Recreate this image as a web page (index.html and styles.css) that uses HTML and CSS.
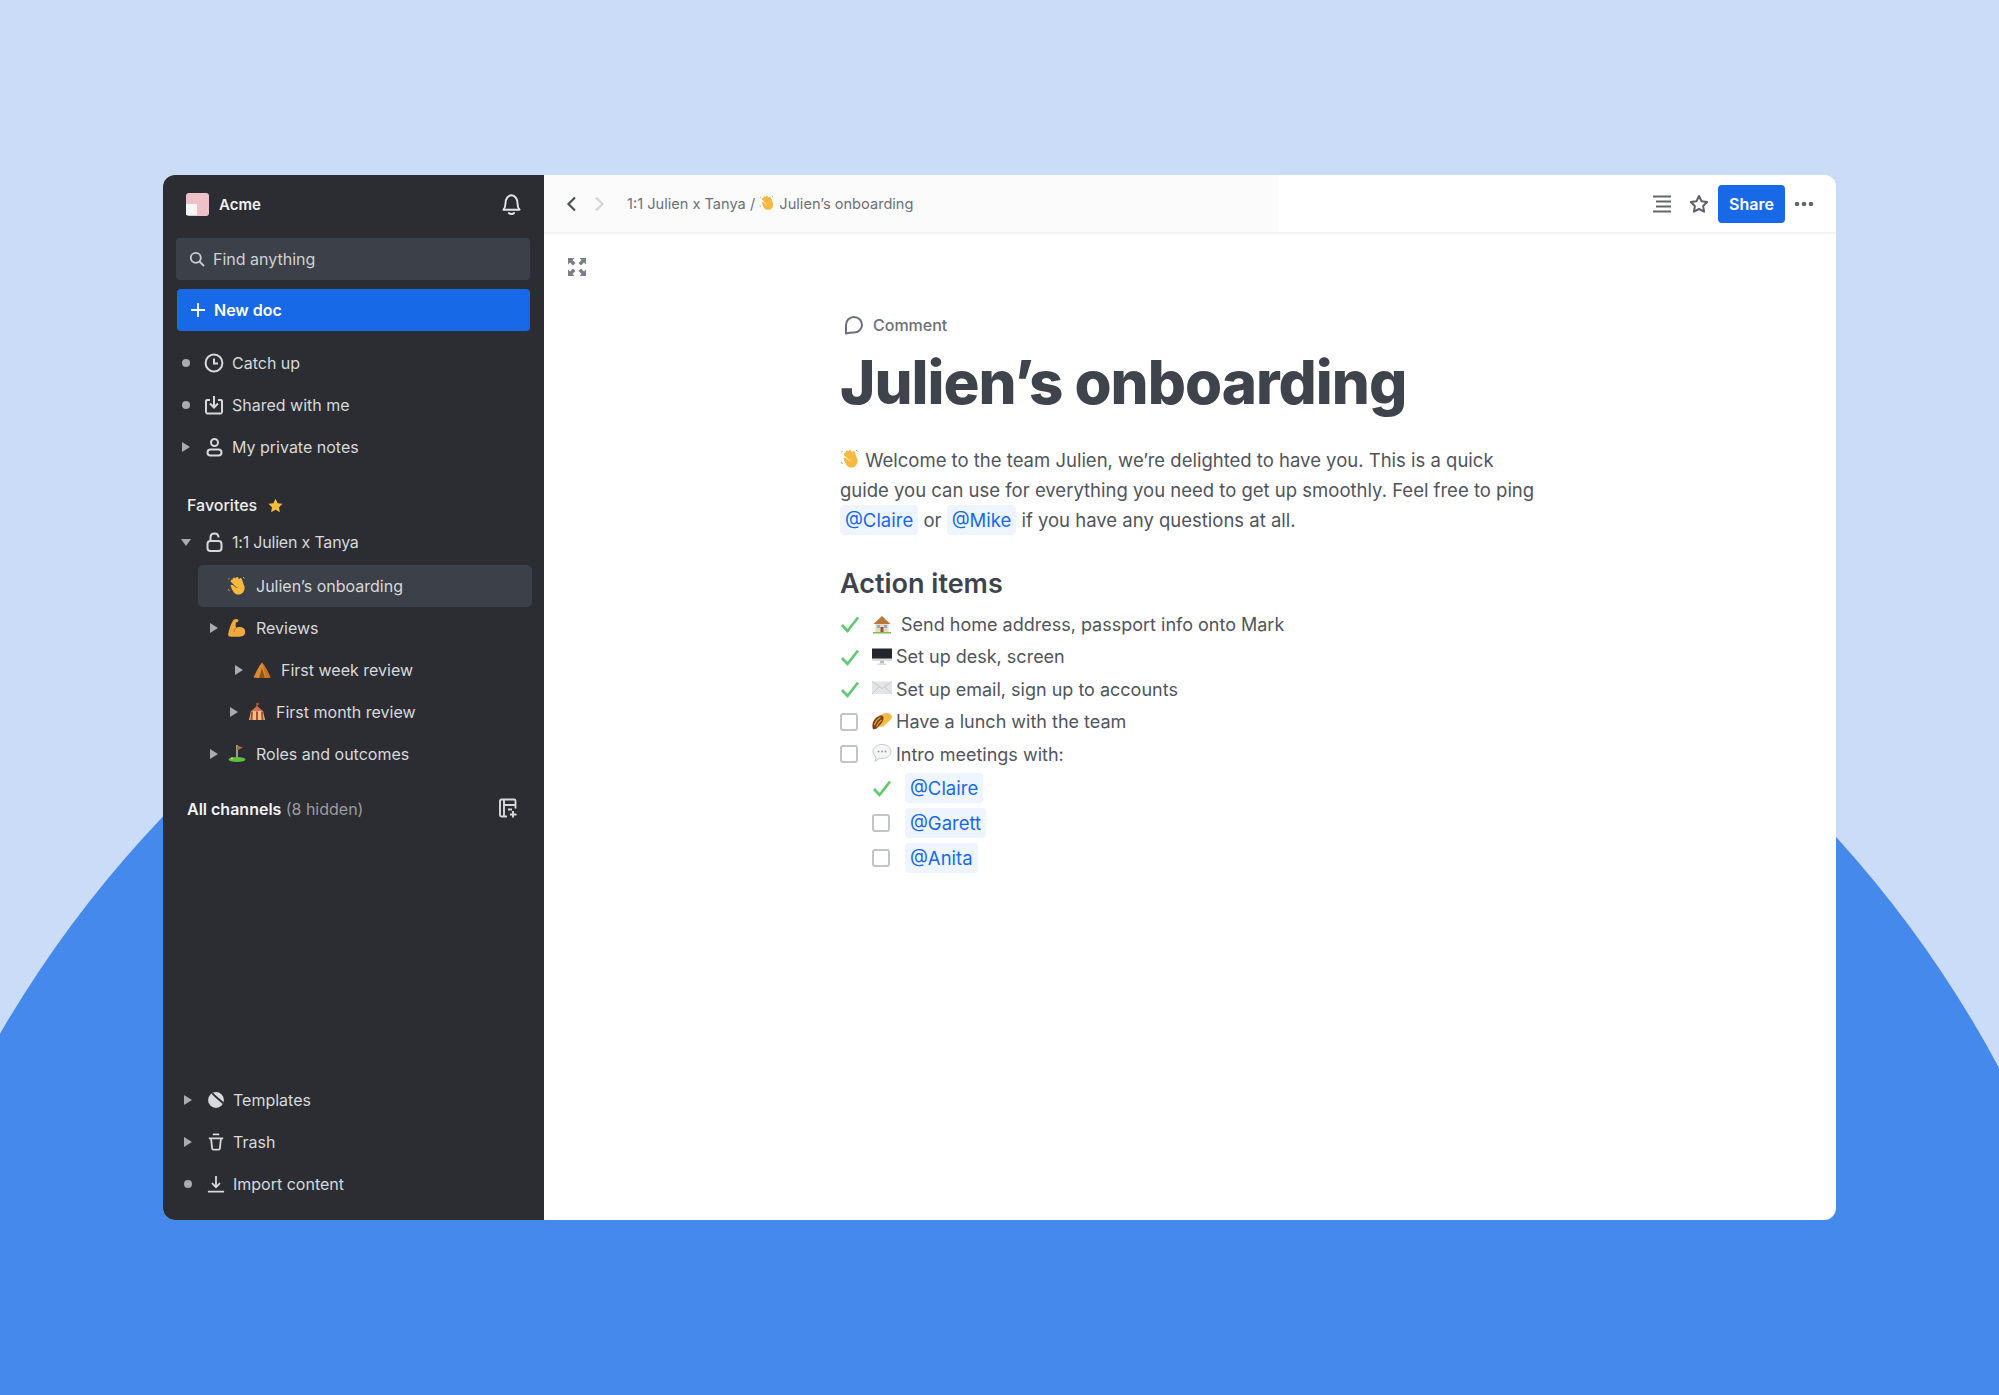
FILE: index.html
```html
<!DOCTYPE html>
<html lang="en">
<head>
  <meta charset="UTF-8">
  <title>Julien's onboarding</title>
  <link rel="stylesheet" href="styles.css">
</head>
<body>
  <!-- emoji drawn once, reused below -->
  <svg class="sprite" aria-hidden="true">
    <symbol id="e-wave" viewBox="0 0 20 20">
      <path d="M5 5l5 5M7 3l5 6M10 2.500l4 6.500M13.500 3.500l2 6" stroke="#f5b93d" stroke-width="2.800" stroke-linecap="round" fill="none"/>
      <path d="M3.500 9.500c1-1.500 3-.5 4 1l2 1.500 5-4 3 2c.5 4-1 8-5.500 8.500-4 .5-6.500-3-8.500-9z" fill="#f5b93d"/>
      <path d="M1.500 3.500l1-1.500M16 1l1.500 1.500M1 13l1.500 2" stroke="#9aa0a8" stroke-width="1" fill="none"/>
    </symbol>
    <symbol id="e-muscle" viewBox="0 0 20 20">
      <path d="M7 1.500c2-1 4.500-.5 4.500 1 0 1.500-2 1.500-2.500 2-.5 1.500-.5 3.500 0 5.500 2-1.500 6-1.500 8 .5 2 2.500 1.500 6-1 7.500-3 1-9 1-13.500 .5-1.500-.5-1.500-2-1-4C2.500 10 4.500 4 7 1.500z" fill="#f0a93a"/>
      <path d="M9 10c-1 1-2 2.500-2 4" stroke="#b97a1e" stroke-width="1" fill="none"/>
    </symbol>
    <symbol id="e-tent" viewBox="0 0 20 20">
      <path d="M10 2.500C7 6 4 12 1.500 17.500L6 18h8l4.500-.5C16 12 13 6 10 2.500z" fill="#dd8a30"/>
      <path d="M10 8l-3 10h6z" fill="#8a5620"/>
      <path d="M10 2.500c3 3.500 6 9 8.500 15l-4.500.5C13 13 11.500 7 10 2.500z" fill="#c5711f"/>
    </symbol>
    <symbol id="e-circus" viewBox="0 0 20 20">
      <path d="M10 1v4" stroke="#c8743a" stroke-width="1"/>
      <path d="M10 1l3 1-3 1z" fill="#d9503f"/>
      <path d="M10 4l6 5H4z" fill="#d9704a"/>
      <path d="M4 9h12l2 9H2z" fill="#ecc28a"/>
      <path d="M5 9.500L4.500 18M10 9.500V18M15 9.500l.5 8.500" stroke="#b8472f" stroke-width="2"/>
    </symbol>
    <symbol id="e-golf" viewBox="0 0 20 20">
      <path d="M10 1v14" stroke="#e5e5e5" stroke-width="1.200"/>
      <path d="M10 1.500l6 2-6 3z" fill="#c9622f"/>
      <ellipse cx="10" cy="15.500" rx="8.500" ry="2.500" fill="#5fbf3f"/>
      <circle cx="5" cy="14.300" r="1" fill="#d8e06a"/>
    </symbol>
    <symbol id="e-house" viewBox="0 0 20 20">
      <path d="M3.500 9h13v9h-13z" fill="#ecd9b4"/>
      <path d="M10 2L1.500 10h17z" fill="#b9773c"/>
      <path d="M5 11h3v3H5zM12 11h3v3h-3z" fill="#7fb2d9"/>
      <path d="M8.500 13h3v5h-3z" fill="#8a5a30"/>
      <path d="M1 18h18v1.500H1z" fill="#7dbb56"/>
    </symbol>
    <symbol id="e-monitor" viewBox="0 0 20 20">
      <path d="M0 1.500h20v12H0z" fill="#23262b"/>
      <path d="M0 11.500h20v2.500H0z" fill="#d9dbdd"/>
      <path d="M8 14h4v2.500H8z" fill="#b8babd"/>
      <path d="M5.500 16.500h9V18h-9z" fill="#d9dbdd"/>
    </symbol>
    <symbol id="e-mail" viewBox="0 0 20 20">
      <path d="M0 2.500h20V15H0z" fill="#e3e5e8"/>
      <path d="M0 2.500l10 7 10-7M0 15l7-7M20 15l-7-7" stroke="#c4c7cb" stroke-width="1" fill="none"/>
    </symbol>
    <symbol id="e-taco" viewBox="0 0 20 20">
      <path d="M4 15C3 7 9 .5 15 1c3 .3 5 2 5 4-1 3-5 6-9 9.500z" fill="#f3bb45"/>
      <path d="M1 17C-1 12 2 6 7 4c2-1 4-.5 4.500 1.500.5 3-2 6-4.500 8.500-2 2.500-4 4-6 3z" fill="#7a3f1a"/>
      <path d="M2.500 13c1-3 3-6 6-7.500M4.500 14.500c1-2 3-5 5-6.500" stroke="#e8a534" stroke-width="1.300" fill="none"/>
    </symbol>
    <symbol id="e-speech" viewBox="0 0 20 20">
      <path d="M10 .5c5 0 9 3 9 7s-4 7-9 7c-1 0-2 0-2.500-.3L3 17.500l1-4.500C2 11.500 1 9.500 1 7.500c0-4 4-7 9-7z" fill="#f4f5f6" stroke="#c6c9cd" stroke-width="1"/>
      <circle cx="6.500" cy="7.500" r=".9" fill="#8d9197"/><circle cx="10" cy="7.500" r=".9" fill="#8d9197"/><circle cx="13.500" cy="7.500" r=".9" fill="#8d9197"/>
    </symbol>
    <symbol id="i-check" viewBox="0 0 20 20">
      <path d="M2 11l5.500 6L18 3.500" fill="none" stroke="#62c86f" stroke-width="2.700"/>
    </symbol>
  </svg>

  <div class="backdrop"><div class="arc"></div></div>

  <div class="stage">
    <div class="window">

      <!-- Sidebar -->
      <aside class="sidebar">
        <div class="workspace">
          <div class="logo"><span></span></div>
          <div class="workspace-name">Acme</div>
          <svg class="bell" width="23" height="23" viewBox="0 0 20 20" fill="none" stroke="#e4e5e7" stroke-width="1.700">
            <path d="M3 14.500c1.500-1.500 1.800-3 1.800-5.500C4.800 5 7 2 10 2s5.200 3 5.200 7c0 2.500.3 4 1.800 5.500z" stroke-linejoin="round"/>
            <path d="M7.800 17.500c1.300.8 3.100.8 4.400 0" stroke-linecap="round"/>
          </svg>
        </div>

        <div class="search">
          <svg width="16" height="16" viewBox="0 0 16 16" fill="none" stroke="#c9cbce" stroke-width="1.800"><circle cx="6.800" cy="6.800" r="5"/><path d="M10.500 10.500L15 15"/></svg>
          <span>Find anything</span>
        </div>
        <div class="new-doc">
          <svg width="16" height="16" viewBox="0 0 16 16" stroke="#fff" stroke-width="1.800"><path d="M8 1v14M1 8h14"/></svg>
          <span>New doc</span>
        </div>

        <nav class="nav">
          <div class="row">
            <span class="slot"><i class="dot"></i></span>
            <svg class="ico" width="20" height="20" viewBox="0 0 20 20" fill="none" stroke="#d8d9db" stroke-width="2"><circle cx="10" cy="10" r="8.400"/><path d="M10 5.500V10.500H14"/></svg>
            <span class="label">Catch up</span>
          </div>
          <div class="row">
            <span class="slot"><i class="dot"></i></span>
            <svg class="ico" width="20" height="20" viewBox="0 0 20 20" fill="none" stroke="#d8d9db" stroke-width="2"><path d="M6 5H3a2 2 0 0 0-1 1v11a2 2 0 0 0 1 1.500h14a2 2 0 0 0 1-1.500V6a2 2 0 0 0-1-1h-3"/><path d="M10 1V12.500M6 8.500l4 4 4-4"/></svg>
            <span class="label">Shared with me</span>
          </div>
          <div class="row">
            <span class="slot"><i class="caret"></i></span>
            <svg class="ico" width="20" height="20" viewBox="0 0 20 20" fill="none" stroke="#d8d9db" stroke-width="2"><circle cx="10.500" cy="5.500" r="3.500"/><rect x="3.500" y="12.500" width="14" height="6" rx="3"/></svg>
            <span class="label">My private notes</span>
          </div>
        </nav>

        <div class="section-head favorites">
          Favorites
          <svg width="15" height="15" viewBox="0 0 20 20" fill="#f7bb3e"><path d="M10 1l2.900 5.900 6.500.9-4.700 4.600 1.100 6.500L10 15.800l-5.800 3.100 1.100-6.500L.6 7.800l6.500-.9z"/></svg>
        </div>

        <div class="row row-parent">
          <span class="slot"><i class="caret open"></i></span>
          <svg class="ico" width="20" height="20" viewBox="0 0 20 20" fill="none" stroke="#d8d9db" stroke-width="2"><rect x="3.500" y="9" width="14" height="10" rx="3"/><path d="M6.500 9V5.500C6.500 3 8.300 1.500 10.500 1.500s4 1.500 4 4"/></svg>
          <span class="label tight">1:1 Julien x Tanya</span>
        </div>
        <div class="row tree selected">
          <svg class="emoji" width="20" height="20"><use href="#e-wave"/></svg>
          <span class="label">Julien’s onboarding</span>
        </div>
        <div class="row tree depth-1">
          <span class="slot"><i class="caret"></i></span>
          <svg class="emoji" width="20" height="20"><use href="#e-muscle"/></svg>
          <span class="label">Reviews</span>
        </div>
        <div class="row tree depth-3">
          <span class="slot"><i class="caret"></i></span>
          <svg class="emoji" width="20" height="20"><use href="#e-tent"/></svg>
          <span class="label">First week review</span>
        </div>
        <div class="row tree depth-2">
          <span class="slot"><i class="caret"></i></span>
          <svg class="emoji" width="20" height="20"><use href="#e-circus"/></svg>
          <span class="label">First month review</span>
        </div>
        <div class="row tree depth-1">
          <span class="slot"><i class="caret"></i></span>
          <svg class="emoji" width="20" height="20"><use href="#e-golf"/></svg>
          <span class="label">Roles and outcomes</span>
        </div>

        <div class="section-head channels">
          <span><b>All channels</b> <span class="muted">(8 hidden)</span></span>
          <svg class="add-channel" width="20" height="20" viewBox="0 0 20 20" fill="none" stroke="#d8d9db" stroke-width="1.900"><path d="M9 18.500H3.500A1.500 1.500 0 0 1 2 17V3a1.500 1.500 0 0 1 1.500-1.500h12.500A1.500 1.500 0 0 1 17.500 3v7.500"/><path d="M6 2v16.500M6 7h11.500M10 11.500h4"/><path d="M15 13v6.500M12 16.500h6.500"/></svg>
        </div>

        <div class="bottom">
          <div class="row">
            <span class="slot"><i class="caret"></i></span>
            <svg class="ico" width="18" height="18" viewBox="0 0 20 20"><circle cx="10" cy="10" r="8.800" fill="#d8d9db"/><path d="M6 2.500c3 4 7 6.500 12 11" fill="none" stroke="#2b2d33" stroke-width="2.200"/></svg>
            <span class="label">Templates</span>
          </div>
          <div class="row">
            <span class="slot"><i class="caret"></i></span>
            <svg class="ico" width="18" height="18" viewBox="0 0 20 20" fill="none" stroke="#d8d9db" stroke-width="2"><path d="M6.500 1.500h7M2 6h16M4.500 6l1.200 11c.1 1 .8 1.500 1.500 1.500h5.600c.7 0 1.400-.5 1.500-1.500L15.500 6"/></svg>
            <span class="label">Trash</span>
          </div>
          <div class="row">
            <span class="slot"><i class="dot"></i></span>
            <svg class="ico" width="18" height="18" viewBox="0 0 20 20" fill="none" stroke="#d8d9db" stroke-width="2"><path d="M10 1v12M5.500 9l4.500 4.500L14.500 9M1 18.500h18"/></svg>
            <span class="label">Import content</span>
          </div>
        </div>
      </aside>

      <!-- Document -->
      <main class="main">
        <header class="topbar">
          <div class="crumbs">
            <svg width="20" height="20" viewBox="0 0 20 20" fill="none" stroke="#4c5159" stroke-width="2.200"><path d="M13 3.500L6.500 10l6.500 6.500"/></svg>
            <svg class="next" width="20" height="20" viewBox="0 0 20 20" fill="none" stroke="#d3d5d8" stroke-width="2.200"><path d="M7 3.500l6.500 6.500L7 16.500"/></svg>
            <div class="path">1:1 Julien x Tanya / <svg width="16" height="16"><use href="#e-wave"/></svg> Julien’s onboarding</div>
          </div>
          <div class="actions">
            <svg width="22" height="20" viewBox="0 0 22 20" stroke="#63686f" stroke-width="2.200"><path d="M2 2.500h18M5 7.500h15M5 12.500h15M2 17.500h18"/></svg>
            <svg class="star" width="20" height="20" viewBox="0 0 20 20" fill="none" stroke="#5c6168" stroke-width="2" stroke-linejoin="round"><path d="M10 2l2.500 5.200 5.700.8-4.100 4 1 5.700-5.100-2.700-5.100 2.700 1-5.700-4.100-4 5.700-.8z"/></svg>
            <button class="share">Share</button>
            <svg class="more" width="20" height="20" viewBox="0 0 20 20" fill="#63686f"><circle cx="3" cy="10" r="2.300"/><circle cx="10" cy="10" r="2.300"/><circle cx="17" cy="10" r="2.300"/></svg>
          </div>
        </header>

        <div class="body">
          <div class="gutter">
            <svg width="20" height="20" viewBox="0 0 20 20" fill="#7b8087"><path d="M1 1h6.500L5.500 3l3 3L6 8.500l-3-3L1 7.500zM19 1v6.500l-2-2-3 3L11.500 6l3-3-2-2zM1 19v-6.500l2 2 3-3L8.500 14l-3 3 2 2zM19 19h-6.500l2-2-3-3 2.500-2.500 3 3 2-2z"/></svg>
          </div>
          <article class="doc">
            <div class="comment">
              <svg width="22" height="22" viewBox="0 0 22 22" fill="none" stroke="#6b7079" stroke-width="2"><path d="M3 19.500V11c0-4.500 3.500-8 8-8s8 3.500 8 7.800-3.500 7.700-8 7.700c-2.500 0-5 0-8 1z" stroke-linejoin="round"/></svg>
              <span>Comment</span>
            </div>
            <h1>Julien’s onboarding</h1>
            <p class="intro">
              <svg class="inline-emoji" width="20" height="20"><use href="#e-wave"/></svg> Welcome to the team Julien, we’re delighted to have you. This is a quick<br>
              guide you can use for everything you need to get up smoothly. Feel free to ping<br>
              <span class="mention">@Claire</span> or <span class="mention">@Mike</span> if you have any questions at all.
            </p>
            <h2>Action items</h2>
            <ul class="tasks">
              <li><svg class="mark" width="20" height="20"><use href="#i-check"/></svg><svg class="task-emoji" width="20" height="20"><use href="#e-house"/></svg><span class="wide">Send home address, passport info onto Mark</span></li>
              <li><svg class="mark" width="20" height="20"><use href="#i-check"/></svg><svg class="task-emoji" width="20" height="20"><use href="#e-monitor"/></svg><span>Set up desk, screen</span></li>
              <li><svg class="mark" width="20" height="20"><use href="#i-check"/></svg><svg class="task-emoji" width="20" height="20"><use href="#e-mail"/></svg><span>Set up email, sign up to accounts</span></li>
              <li><i class="box"></i><svg class="task-emoji" width="20" height="20"><use href="#e-taco"/></svg><span>Have a lunch with the team</span></li>
              <li><i class="box"></i><svg class="task-emoji" width="20" height="20"><use href="#e-speech"/></svg><span>Intro meetings with:</span></li>
            </ul>
            <ul class="subtasks">
              <li><svg class="mark" width="20" height="20"><use href="#i-check"/></svg><span class="mention">@Claire</span></li>
              <li><i class="box"></i><span class="mention">@Garett</span></li>
              <li><i class="box"></i><span class="mention">@Anita</span></li>
            </ul>
          </article>
        </div>
      </main>
    </div>
  </div>
</body>
</html>
```

FILE: styles.css
```css
:root {
  --sky: #cbdcf9;
  --blue-bg: #4689ec;
  --blue: #1769e8;
  --side: #2b2d33;
  --side-hi: #3c4048;
  --side-text: #d8d9db;
  --ink: #3f444c;
  --body-text: #50545b;
  --grey: #6b7079;
}
* {box-sizing: border-box; margin: 0; padding: 0;}
html, body {height: 100%; overflow: hidden;}
body {
  font-family: Inter, "Noto Sans", sans-serif;
  background: var(--sky);
  position: relative;
}
.sprite {position: absolute; width: 0; height: 0;}

/* Backdrop */
.backdrop {position: absolute; inset: 0; overflow: hidden;}
.arc {
  position: absolute;
  left: -154px;
  top: 463px;
  width: 2288px;
  height: 2288px;
  border-radius: 50%;
  background: var(--blue-bg);
}

.stage {position: relative; padding: 175px 0 0 163px;}
.window {
  width: 1673px;
  height: 1045px;
  display: flex;
  border-radius: 12px;
  overflow: hidden;
  background: #fff;
}

/* Sidebar */
.sidebar {
  width: 381px;
  flex: none;
  background: var(--side);
  color: var(--side-text);
  display: flex;
  flex-direction: column;
  font-size: 16px;
}
.workspace {
  height: 63px;
  display: flex;
  align-items: center;
  padding: 0 23px 4px;
  flex: none;
}
.logo {
  width: 23px;
  height: 23px;
  border-radius: 3px;
  background: #f0c0c8;
  display: flex;
  align-items: flex-end;
  padding-bottom: 1px;
}
.logo span {width: 11px; height: 11px; background: #f6f6f6;}
.workspace-name {margin-left: 10px; font-size: 15px; font-weight: 600; color: #f2f2f3; flex: 1;}
.bell {margin-right: -2px;}
.search {
  margin-left: 13px;
  width: 354px;
  height: 42px;
  flex: none;
  background: var(--side-hi);
  border-radius: 4px;
  display: flex;
  align-items: center;
  gap: 8px;
  padding-left: 13px;
  color: #d0d2d5;
}
.new-doc {
  margin: 9px 0 0 14px;
  width: 353px;
  height: 42px;
  flex: none;
  background: var(--blue);
  border-radius: 4px;
  display: flex;
  align-items: center;
  gap: 8px;
  padding-left: 13px;
  color: #fff;
  font-weight: 600;
}
.nav {margin-top: 11px;}
.row {
  height: 42px;
  flex: none;
  display: flex;
  align-items: center;
  padding-left: 15px;
}
.slot {width: 16px; flex: none; display: flex; justify-content: center; align-items: center;}
.dot {width: 8px; height: 8px; border-radius: 50%; background: #a9abaf;}
.caret {
  width: 0;
  height: 0;
  border-left: 8px solid #a9abaf;
  border-top: 5.500px solid transparent;
  border-bottom: 5.500px solid transparent;
}
.caret.open {
  border-left: 5.500px solid transparent;
  border-right: 5.500px solid transparent;
  border-top: 7px solid #a9abaf;
  border-bottom: 0;
}
.ico {margin-left: 10px; flex: none;}
.label {margin-left: 8px; white-space: nowrap;}
.tight {letter-spacing: -.2px;}

.section-head {
  height: 34px;
  flex: none;
  display: flex;
  align-items: center;
  padding: 0 26px 0 24px;
  color: #eeeeef;
  font-weight: 500;
}
.favorites {margin-top: 20px; gap: 11px;}
.channels {margin-top: 17px; justify-content: space-between;}
.channels b {font-weight: 600; color: #f4f4f5;}
.muted {color: #9a9ca1; font-weight: 400;}
.add-channel {margin-top: -3px;}

.row-parent {height: 40px; margin-bottom: 3px;}
.tree .emoji {margin-left: 5px; flex: none;}
.tree .label {margin-left: 9px;}
.selected {
  margin-left: 35px;
  width: 334px;
  background: var(--side-hi);
  border-radius: 5px;
  padding-left: 29px;
}
.selected .emoji {margin-left: 0;}
.depth-1 {padding-left: 43px;}
.depth-2 {padding-left: 63px;}
.depth-3 {padding-left: 68px;}
.bottom {margin-top: auto; padding: 0 0 15px 2px;}
.bottom .ico {margin-left: 11px;}

/* Top bar */
.main {flex: 1; display: flex; flex-direction: column; min-width: 0;}
.topbar {
  height: 59px;
  flex: none;
  display: flex;
  align-items: center;
  justify-content: space-between;
  padding: 0 22px 0 18px;
  border-bottom: 2px solid #f3f4f5;
  background: linear-gradient(to right, #fbfbfb 734px, #fff 736px);
}
.crumbs {display: flex; align-items: center;}
.next {margin-left: 7px;}
.path {margin-left: 18px; font-size: 14.600px; color: var(--grey); white-space: nowrap;}
.path svg {vertical-align: -2px;}
.actions {display: flex; align-items: center;}
.star {margin-left: 16px;}
.share {
  margin-left: 9px;
  width: 67px;
  height: 38px;
  border: none;
  border-radius: 4px;
  background: var(--blue);
  color: #fff;
  font: 600 16px Inter, sans-serif;
}
.more {margin-left: 9px;}

/* Document */
.body {display: flex; flex: 1;}
.gutter {width: 296px; flex: none; padding: 23px 0 0 23px;}
.doc {padding-top: 79px; width: 800px;}
.comment {
  height: 24px;
  display: flex;
  align-items: center;
  gap: 8px;
  padding-left: 3px;
  font-size: 16px;
  font-weight: 500;
  color: var(--grey);
}
h1 {
  margin-top: 9px;
  font-size: 60px;
  line-height: 72px;
  font-weight: 800;
  color: var(--ink);
  letter-spacing: -1px;
}
.intro {
  margin-top: 27px;
  font-size: 18.500px;
  line-height: 30px;
  color: var(--body-text);
}
.inline-emoji {vertical-align: -2px;}
.mention {
  display: inline-block;
  height: 30px;
  line-height: 30px;
  padding: 0 5px;
  background: #eef5fe;
  border-radius: 4px;
  color: var(--blue);
}
h2 {
  margin-top: 31px;
  font-size: 27px;
  line-height: 36px;
  font-weight: 600;
  color: var(--ink);
}
ul {list-style: none;}
.tasks {margin-top: 6px;}
.tasks li {
  height: 32.500px;
  display: flex;
  align-items: center;
  font-size: 18px;
  color: var(--body-text);
}
.mark {flex: none; width: 20px; height: 20px;}
.box {
  flex: none;
  display: block;
  width: 18px;
  height: 18px;
  margin-right: 2px;
  border: 2px solid #c1c4c8;
  border-radius: 3px;
}
.task-emoji {margin: 0 4px 0 12px; flex: none;}
.wide {margin-left: 5px;}
.subtasks {margin-left: 32px;}
.subtasks li {
  height: 35px;
  display: flex;
  align-items: center;
  gap: 13px;
  font-size: 18.500px;
}
```
